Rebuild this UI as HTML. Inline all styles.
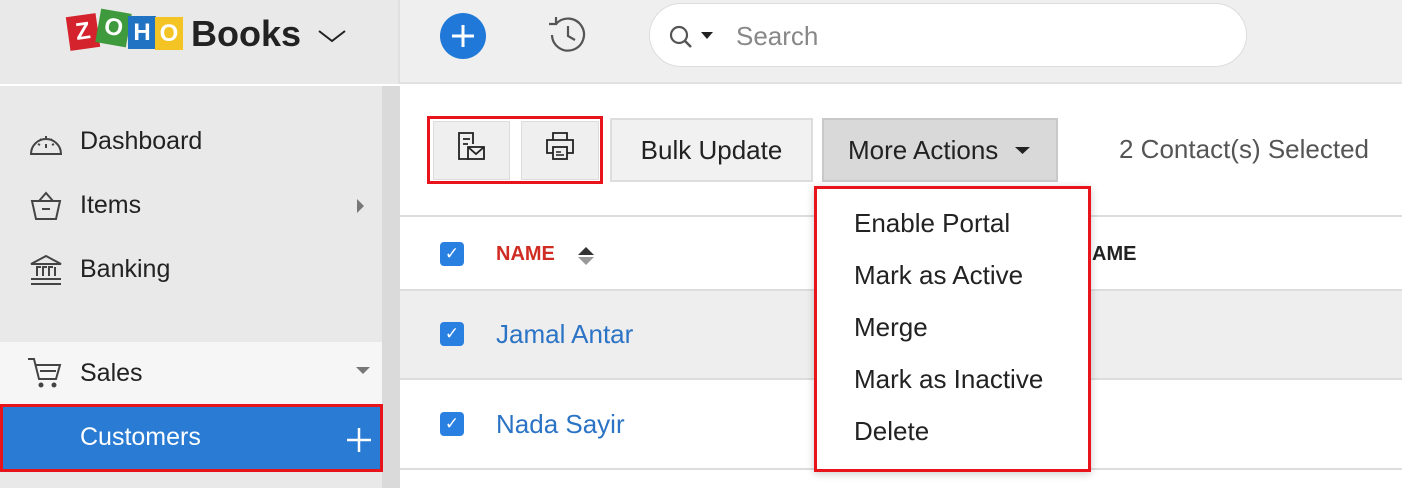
<!DOCTYPE html>
<html><head><style>
*{margin:0;padding:0;box-sizing:border-box}
body{width:1402px;height:488px;overflow:hidden;background:#fff;font-family:"Liberation Sans",sans-serif;position:relative;color:#222}
.a{position:absolute}
.nav{font-size:25px;color:#222}
</style></head><body>
<div class="a" style="left:0;top:0;width:1402px;height:84px;background:#efefef;border-bottom:2px solid #e2e2e2"></div>
<div class="a" style="left:0;top:0;width:400px;height:84px;background:#e9e9e9;border-right:2px solid #e0e0e0"></div>
<div class="a" style="left:68px;top:15px;width:30px;height:34px;background:#d4232c;transform:rotate(-8deg);color:#fff;font:bold 24px 'Liberation Sans';text-align:center;line-height:34px">Z</div>
<div class="a" style="left:98px;top:11px;width:31px;height:34px;background:#3f9a3d;transform:rotate(10deg);color:#fff;font:bold 24px 'Liberation Sans';text-align:center;line-height:34px">O</div>
<div class="a" style="left:128px;top:16px;width:28px;height:33px;background:#1f73c2;color:#fff;font:bold 24px 'Liberation Sans';text-align:center;line-height:33px">H</div>
<div class="a" style="left:155px;top:17px;width:28px;height:33px;background:#f4c324;color:#fff;font:bold 24px 'Liberation Sans';text-align:center;line-height:33px">O</div>
<div class="a" style="left:191px;top:13px;font-size:36px;font-weight:bold;color:#222">Books</div>
<svg class="a" style="left:317px;top:28px" width="30" height="16"><path d="M2 3 L15 13 L28 3" stroke="#222" stroke-width="2" fill="none"/></svg>
<div class="a" style="left:440px;top:13px;width:46px;height:46px;border-radius:50%;background:#2079d8"></div>
<svg class="a" style="left:440px;top:13px" width="46" height="46"><path d="M23 12V34M12 23H34" stroke="#fff" stroke-width="3"/></svg>
<svg class="a" style="left:544px;top:12px" width="46" height="46"><path d="M8 23 A16 16 0 1 0 12 12" stroke="#555" stroke-width="2.2" fill="none"/><path d="M5 12 L12 12 L12 5" stroke="#555" stroke-width="2.2" fill="none"/><path d="M24 14V24L31 28" stroke="#555" stroke-width="2.2" fill="none"/></svg>
<div class="a" style="left:649px;top:3px;width:598px;height:64px;border-radius:32px;background:#fff;border:1px solid #ddd"></div>
<svg class="a" style="left:668px;top:24px" width="50" height="26"><circle cx="11" cy="11" r="8" stroke="#555" stroke-width="2.2" fill="none"/><path d="M17 17L23 23" stroke="#555" stroke-width="2.5"/><path d="M33 8H45L39 15Z" fill="#222"/></svg>
<div class="a" style="left:736px;top:21px;font-size:26px;color:#888">Search</div>
<div class="a" style="left:0;top:86px;width:382px;height:402px;background:#e9e9e9"></div>
<div class="a" style="left:382px;top:86px;width:18px;height:402px;background:#dadada"></div>
<svg class="a" style="left:28px;top:127px" width="36" height="30"><path d="M3 27 A15 15 0 1 1 33 27 Z" stroke="#444" stroke-width="2" fill="none"/><path d="M18 21V17M10 17l2 1M26 17l-2 1M18 9v2M12 12l1 1M24 12l-1 1" stroke="#444" stroke-width="2"/></svg>
<div class="a nav" style="left:80px;top:127px">Dashboard</div>
<svg class="a" style="left:28px;top:190px" width="36" height="32"><path d="M4 11H32L28 29H8Z M11 11L18 3L25 11 M14 19H22" stroke="#444" stroke-width="2" fill="none"/></svg>
<div class="a nav" style="left:80px;top:191px">Items</div>
<svg class="a" style="left:356px;top:198px" width="10" height="16"><path d="M1 1L8 8L1 15Z" fill="#777"/></svg>
<svg class="a" style="left:28px;top:253px" width="36" height="34"><path d="M3 11L18 3L33 11Z M9 14V23M15 14V23M21 14V23M27 14V23M3 26H33M3 31H33M8 14h5M14 14h5M20 14h5" stroke="#444" stroke-width="2" fill="none"/></svg>
<div class="a nav" style="left:80px;top:255px">Banking</div>
<div class="a" style="left:0;top:342px;width:382px;height:62px;background:#f6f6f6"></div>
<svg class="a" style="left:26px;top:356px" width="38" height="34"><path d="M2 3H8L13 23H30L34 9H10" stroke="#444" stroke-width="2" fill="none"/><path d="M14 15H30" stroke="#444" stroke-width="2"/><circle cx="15" cy="29" r="2.5" fill="#444"/><circle cx="28" cy="29" r="2.5" fill="#444"/></svg>
<div class="a nav" style="left:80px;top:359px">Sales</div>
<svg class="a" style="left:355px;top:366px" width="16" height="10"><path d="M1 1H15L8 8Z" fill="#777"/></svg>
<div class="a" style="left:0;top:404px;width:383px;height:68px;background:#2a7bd3;border:3px solid #e8141c"></div>
<div class="a" style="left:80px;top:423px;font-size:25px;color:#fff">Customers</div>
<svg class="a" style="left:346px;top:427px" width="26" height="26"><path d="M13 1V25M1 13H25" stroke="#fff" stroke-width="2.5"/></svg>
<div class="a" style="left:427px;top:116px;width:176px;height:68px;border:3px solid #e8141c"></div>
<div class="a" style="left:433px;top:121px;width:77px;height:59px;background:#efefef;border:1px solid #ddd"></div>
<div class="a" style="left:521px;top:121px;width:78px;height:59px;background:#efefef;border:1px solid #ddd"></div>
<svg class="a" style="left:456px;top:131px" width="32" height="32"><path d="M13 28H3V2H17V13" stroke="#222" stroke-width="1.8" fill="none"/><path d="M7 8h7M7 13h5" stroke="#222" stroke-width="1.8"/><rect x="12" y="16" width="16" height="12" stroke="#222" stroke-width="1.8" fill="none"/><path d="M12 16L20 23L28 16" stroke="#222" stroke-width="1.8" fill="none"/></svg>
<svg class="a" style="left:544px;top:131px" width="32" height="32"><path d="M9 9V2H23V9 M9 22H3V9H29V22H23" stroke="#222" stroke-width="1.8" fill="none"/><rect x="9" y="16" width="14" height="12" stroke="#222" stroke-width="1.8" fill="none"/><path d="M12 21h5M12 24h8" stroke="#222" stroke-width="1.6"/></svg>
<div class="a" style="left:610px;top:118px;width:203px;height:64px;background:#f1f1f1;border:2px solid #ddd;font-size:26px;text-align:center;line-height:60px">Bulk Update</div>
<div class="a" style="left:822px;top:118px;width:236px;height:64px;background:#d9d9d9;border:2px solid #c8c8c8;font-size:26px;line-height:60px;padding-left:24px">More Actions</div>
<svg class="a" style="left:1014px;top:146px" width="18" height="10"><path d="M1 1H16L8.5 8Z" fill="#222"/></svg>
<div class="a" style="left:1119px;top:134px;font-size:26px;color:#555">2 Contact(s) Selected</div>
<div class="a" style="left:400px;top:215px;width:1002px;height:2px;background:#ddd"></div>
<div class="a" style="left:400px;top:289px;width:1002px;height:2px;background:#ddd"></div>
<div class="a" style="left:400px;top:291px;width:1002px;height:87px;background:#eeeeee"></div>
<div class="a" style="left:400px;top:378px;width:1002px;height:2px;background:#ddd"></div>
<div class="a" style="left:400px;top:468px;width:1002px;height:2px;background:#ddd"></div>
<div class="a" style="left:440px;top:242px;width:24px;height:24px;border-radius:4px;background:#2a80e0;color:#fff;font-size:17px;text-align:center;line-height:24px">✓</div>
<div class="a" style="left:496px;top:243px;font-size:20px;font-weight:bold;color:#cf2c24">NAME</div>
<svg class="a" style="left:577px;top:246px" width="18" height="20"><path d="M1 9L9 1L17 9Z" fill="#333"/><path d="M1 11L9 19L17 11Z" fill="#999"/></svg>
<div class="a" style="left:1092px;top:243px;font-size:20px;font-weight:bold;color:#222">AME</div>
<div class="a" style="left:440px;top:322px;width:24px;height:24px;border-radius:4px;background:#2a80e0;color:#fff;font-size:17px;text-align:center;line-height:24px">✓</div>
<div class="a" style="left:496px;top:319px;font-size:26px;color:#2b73c5">Jamal Antar</div>
<div class="a" style="left:440px;top:412px;width:24px;height:24px;border-radius:4px;background:#2a80e0;color:#fff;font-size:17px;text-align:center;line-height:24px">✓</div>
<div class="a" style="left:496px;top:409px;font-size:26px;color:#2b73c5">Nada Sayir</div>
<div class="a" style="left:814px;top:186px;width:277px;height:286px;background:#fff;border:3px solid #e8141c;box-shadow:0 2px 8px rgba(0,0,0,.2)"></div>
<div class="a" style="left:854px;top:197px;font-size:26px;line-height:52px">Enable Portal<br>Mark as Active<br>Merge<br>Mark as Inactive<br>Delete</div>
</body></html>
